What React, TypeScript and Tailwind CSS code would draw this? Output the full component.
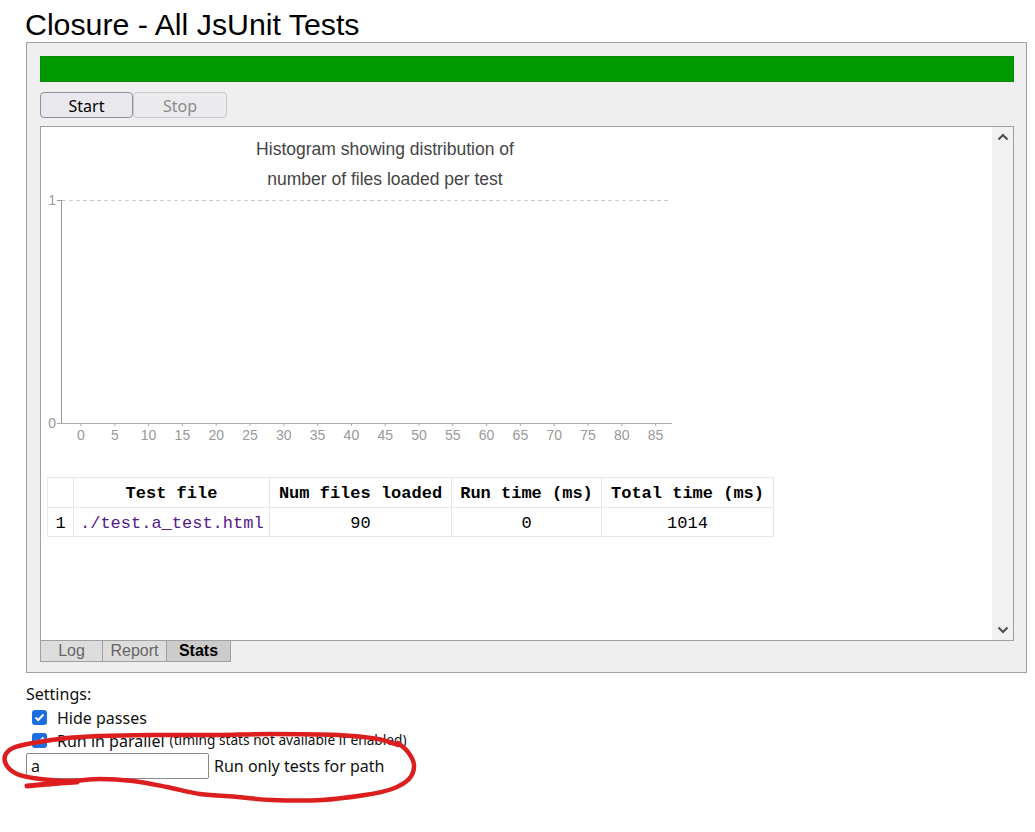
import React from "react";

type Pt = [number, number];

// loop and tail of the red marker scribble, in page pixels
const loopPoints: Pt[] = [
  [398, 745], [378, 739], [338, 735], [272, 734], [215, 735], [150, 735],
  [100, 736], [67, 738], [33, 743], [13, 748], [5, 756], [7, 766], [17, 774],
  [33, 778], [67, 781], [100, 779], [133, 781], [167, 787], [200, 794],
  [238, 797], [272, 800], [322, 800], [365, 795], [392, 789], [409, 779],
  [414, 765], [408, 752], [398, 743],
];
const tailPoints: Pt[] = [[27, 786], [50, 784], [77, 782]];

function smoothPath(points: Pt[]) {
  let d = `M ${points[0][0]} ${points[0][1]}`;
  for (let i = 0; i < points.length - 1; i++) {
    const p0 = points[i - 1] ?? points[i];
    const p1 = points[i];
    const p2 = points[i + 1];
    const p3 = points[i + 2] ?? p2;
    const c1x = p1[0] + (p2[0] - p0[0]) / 6;
    const c1y = p1[1] + (p2[1] - p0[1]) / 6;
    const c2x = p2[0] - (p3[0] - p1[0]) / 6;
    const c2y = p2[1] - (p3[1] - p1[1]) / 6;
    d += ` C ${c1x.toFixed(1)} ${c1y.toFixed(1)}, ${c2x.toFixed(1)} ${c2y.toFixed(1)}, ${p2[0]} ${p2[1]}`;
  }
  return d;
}

const xTicks = Array.from({ length: 18 }, (_, i) => i * 5);

const rows = [
  { idx: 1, file: "./test.a_test.html", loaded: 90, run: 0, total: 1014 },
];

function Histogram() {
  return (
    <svg width="650" height="330" className="block" style={{ fontFamily: '"Liberation Sans", Arial, sans-serif' }}>
      <text x="344" y="28" textAnchor="middle" fontSize="17.5" fill="#444">
        Histogram showing distribution of
      </text>
      <text x="344" y="58" textAnchor="middle" fontSize="17.5" fill="#444">
        number of files loaded per test
      </text>
      <line x1="21" y1="73.5" x2="628" y2="73.5" stroke="#cccccc" strokeDasharray="4 3" />
      <line x1="16" y1="73.5" x2="21" y2="73.5" stroke="#999" />
      <line x1="20.5" y1="73" x2="20.5" y2="297" stroke="#999" />
      <line x1="16" y1="296.5" x2="631" y2="296.5" stroke="#aaa" />
      <text x="15" y="78" textAnchor="end" fontSize="14" fill="#999">1</text>
      <text x="15" y="301" textAnchor="end" fontSize="14" fill="#999">0</text>
      {xTicks.map((t, i) => {
        const x = 40 + i * 33.8;
        return (
          <g key={t}>
            <line x1={x} y1="296" x2={x} y2="299" stroke="#aaa" />
            <text x={x} y="313" textAnchor="middle" fontSize="14" fill="#999">
              {t}
            </text>
          </g>
        );
      })}
    </svg>
  );
}

function Chevron({ up }: { up?: boolean }) {
  return (
    <svg width="12" height="8" viewBox="0 0 12 8">
      <polyline
        points={up ? "1.5,6.5 6,2 10.5,6.5" : "1.5,1.5 6,6 10.5,1.5"}
        fill="none"
        stroke="#505050"
        strokeWidth="2.2"
      />
    </svg>
  );
}

function CheckBox() {
  return (
    <span className="flex h-[15px] w-[15px] items-center justify-center rounded-[3px] bg-[#1b6ee0]">
      <svg width="11" height="9" viewBox="0 0 11 9">
        <polyline points="1.5,4.5 4.2,7 9.5,1.5" fill="none" stroke="#fff" strokeWidth="2" />
      </svg>
    </span>
  );
}

export default function App() {
  return (
    <div className="relative h-[832px] w-[1035px] overflow-hidden bg-white pl-[26px] text-black">
      <h1 className="ml-[-1px] mt-[10px] text-[30.3px] leading-[30px] font-normal font-['Liberation_Sans',Arial,sans-serif]">
        Closure - All JsUnit Tests
      </h1>

      <div className="mt-[2px] w-[1001px] border border-[#a0a0a0] bg-[#efefef] pb-[10px] pl-[13px] pr-[12px] pt-[13px]">
        <div className="h-[26px] w-[974px] border border-[#088a08] bg-[#009900]" />

        <div className="mt-[10px] flex font-['Noto_Sans',sans-serif] text-[16px]">
          <button className="flex h-[26px] w-[93px] items-center justify-center rounded-[4px] border border-[#8f8f9d] bg-[#e9e9ed] pt-[1px] text-black">
            Start
          </button>
          <button className="flex h-[26px] w-[94px] items-center justify-center rounded-[4px] border border-[#c9c9cf] bg-[#ebebee] pt-[1px] text-[#8a8a8a]">
            Stop
          </button>
        </div>

        <div className="mt-[8px] flex h-[515px] w-[974px] border border-[#a0a0a0] bg-white">
          <div className="flex-1">
            <Histogram />
            <table className="ml-[6px] mt-[20px] w-[726px] table-fixed border-collapse font-['Liberation_Mono',monospace] text-[17px]">
              <colgroup>
                <col className="w-[26px]" />
                <col className="w-[196px]" />
                <col className="w-[182px]" />
                <col className="w-[150px]" />
                <col className="w-[172px]" />
              </colgroup>
              <thead>
                <tr className="h-[29px] font-bold">
                  <th className="border border-[#e8e8e8] pt-[3px]" />
                  <th className="border border-[#e8e8e8] pt-[3px] text-center">Test file</th>
                  <th className="border border-[#e8e8e8] pt-[3px] text-center">Num files loaded</th>
                  <th className="border border-[#e8e8e8] pt-[3px] text-center">Run time (ms)</th>
                  <th className="border border-[#e8e8e8] pt-[3px] text-center">Total time (ms)</th>
                </tr>
              </thead>
              <tbody>
                {rows.map((r) => (
                  <tr key={r.idx} className="h-[28px]">
                    <td className="border border-[#e8e8e8] pt-[3px] text-center">{r.idx}</td>
                    <td className="border border-[#e8e8e8] pl-[6px] pt-[3px] text-[#551a8b]">{r.file}</td>
                    <td className="border border-[#e8e8e8] pt-[3px] text-center">{r.loaded}</td>
                    <td className="border border-[#e8e8e8] pt-[3px] text-center">{r.run}</td>
                    <td className="border border-[#e8e8e8] pt-[3px] text-center">{r.total}</td>
                  </tr>
                ))}
              </tbody>
            </table>
          </div>
          <div className="flex w-[21px] flex-col items-center justify-between bg-[#f1f1f1] pb-[6px] pt-[6px]">
            <Chevron up />
            <Chevron />
          </div>
        </div>

        <div className="flex font-['Liberation_Sans',Arial,sans-serif] text-[16px]">
          <div className="flex h-[21px] w-[63px] items-center justify-center border-b border-l border-r border-[#a0a0a0] bg-[#dddddd] text-[#666]">
            Log
          </div>
          <div className="flex h-[21px] w-[64px] items-center justify-center border-b border-r border-[#a0a0a0] bg-[#dddddd] text-[#666]">
            Report
          </div>
          <div className="flex h-[21px] w-[64px] items-center justify-center border-b border-r border-[#a0a0a0] bg-[#cccccc] font-bold text-black">
            Stats
          </div>
        </div>
      </div>

      <div className="mt-[9px] font-['Noto_Sans',sans-serif] text-[16px] text-[#111]">
        <div className="h-[24px] leading-[24px]">Settings:</div>
        <div className="flex h-[23px] items-center pl-[6px]">
          <CheckBox />
          <span className="ml-[10px]">Hide passes</span>
        </div>
        <div className="flex h-[23px] items-center pl-[6px]">
          <CheckBox />
          <span className="ml-[10px]">Run in parallel</span>
          <span className="ml-[5px] text-[13.7px]">(timing stats not available if enabled)</span>
        </div>
        <div className="mt-[1px] flex items-center">
          <input
            readOnly
            value="a"
            className="h-[26px] w-[183px] rounded-[2px] border border-[#8a8a8a] px-[4px] text-[16px] outline-none"
          />
          <span className="ml-[5px]">Run only tests for path</span>
        </div>
      </div>

      <svg className="pointer-events-none absolute left-0 top-0" width="1035" height="832">
        <path d={smoothPath(loopPoints)} fill="none" stroke="#dc1e1e" strokeWidth="4.5" strokeLinecap="round" strokeLinejoin="round" />
        <path d={smoothPath(tailPoints)} fill="none" stroke="#dc1e1e" strokeWidth="5" strokeLinecap="round" />
      </svg>
    </div>
  );
}
